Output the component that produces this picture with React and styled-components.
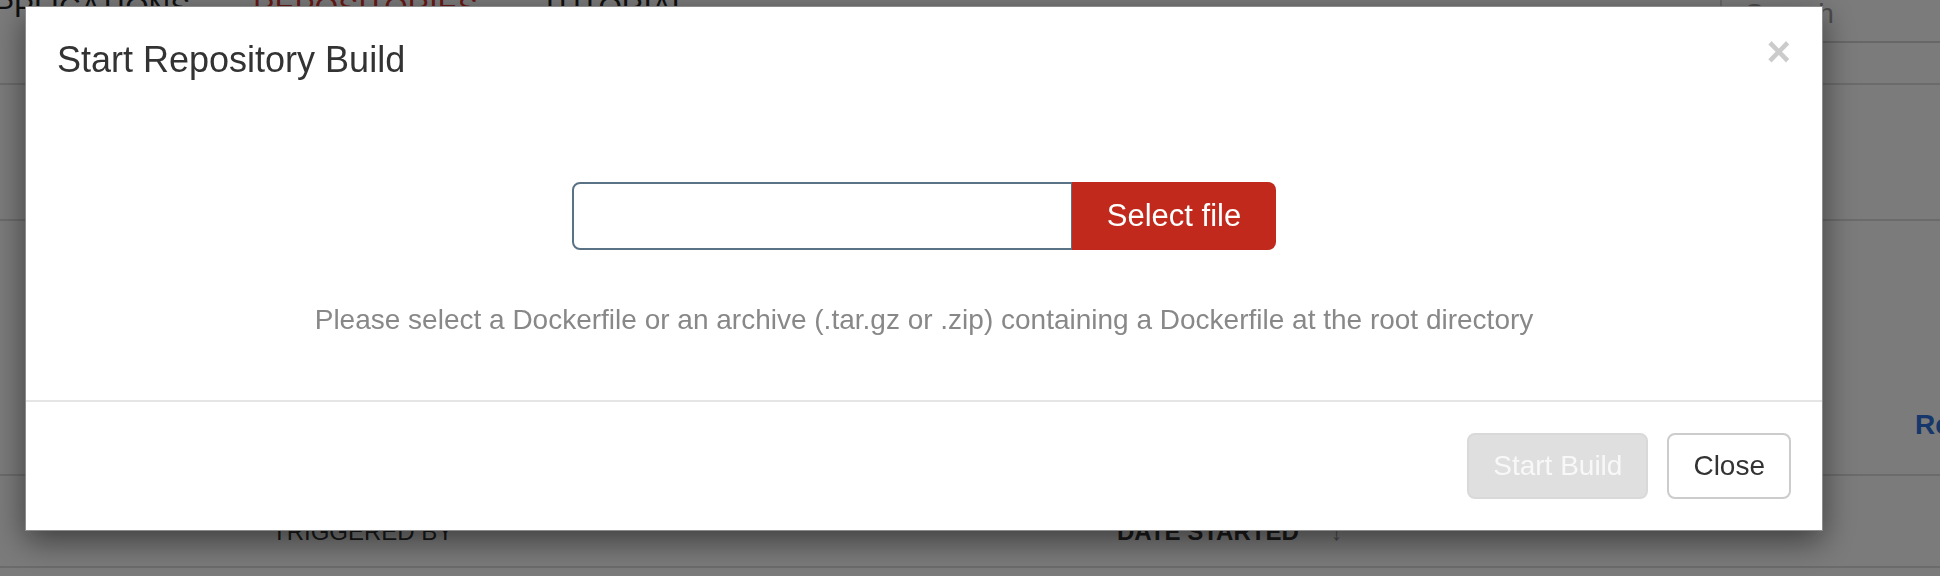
import React from 'react';
import styled, { createGlobalStyle } from 'styled-components';

const GlobalStyle = createGlobalStyle`
  html, body {
    margin: 0;
    padding: 0;
    width: 1940px;
    height: 576px;
    overflow: hidden;
    background: #f6f6f6;
    font-family: "Liberation Sans", Arial, Helvetica, sans-serif;
  }
  * {
    box-sizing: border-box;
  }
`;

const Page = styled.div`
  width: 1940px;
  height: 576px;
  overflow: hidden;
  background: #f6f6f6;
  color: #333;
`;

const Nav = styled.header`
  height: 85px;
  border-bottom: 2px solid #d6d6d6;
  display: flex;
  justify-content: space-between;
  align-items: flex-start;
`;

const NavLinks = styled.nav`
  display: flex;
  gap: 63px;
  margin-left: -26px;
  margin-top: -8px;
`;

const NavLink = styled.a`
  font-size: 30px;
  line-height: 30px;
  text-transform: uppercase;
  text-decoration: none;
  color: ${(p) => (p.$active ? '#d2322d' : '#222')};
`;

const Search = styled.div`
  width: 220px;
  height: 73px;
  margin-top: -30px;
  border: 2px solid #cfcfcf;
  border-right: none;
  display: flex;
  align-items: flex-end;
  padding: 0 0 13px 23px;
  font-size: 28px;
  line-height: 28px;
  color: #999;
`;

const Section = styled.section`
  height: ${(p) => p.$h}px;
  border-bottom: 2px solid #d6d6d6;
`;

const Toolbar = styled(Section)`
  display: flex;
  justify-content: flex-end;
  align-items: flex-start;
  padding-top: 188px;
`;

const ToolLink = styled.a`
  width: 120px;
  margin-right: -95px;
  font-size: 28px;
  line-height: 32px;
  font-weight: bold;
  color: #2a6fd6;
  text-decoration: none;
  white-space: nowrap;
`;

const TableHead = styled(Section)`
  display: grid;
  grid-template-columns: 272px 845px auto;
  padding-top: 36px;
  font-size: 24px;
  line-height: 40px;
  text-transform: uppercase;
`;

const HeadCell = styled.div`
  font-weight: ${(p) => (p.$sorted ? 'bold' : 'normal')};
  color: #333;
  white-space: nowrap;
`;

const SortArrow = styled.span`
  margin-left: 32px;
  color: #999;
  font-weight: normal;
`;

const Backdrop = styled.div`
  position: fixed;
  inset: 0;
  background: rgba(0, 0, 0, 0.5);
`;

const Modal = styled.div`
  position: fixed;
  top: 6px;
  left: 25px;
  width: 1798px;
  background: #fff;
  border: 1px solid rgba(0, 0, 0, 0.45);
  box-shadow: 0 10px 30px rgba(0, 0, 0, 0.5);
`;

const Header = styled.div`
  display: flex;
  justify-content: space-between;
  align-items: flex-start;
  padding: 27px 31px 30px 31px;
`;

const Title = styled.h4`
  margin: 0;
  font-size: 36px;
  line-height: 51px;
  font-weight: normal;
  color: #333;
`;

const CloseX = styled.button`
  margin-top: -3px;
  padding: 0;
  border: 0;
  background: transparent;
  font-family: "Liberation Sans", Arial, sans-serif;
  font-size: 42px;
  line-height: 1;
  font-weight: bold;
  color: #000;
  opacity: 0.2;
  cursor: pointer;
`;

const Body = styled.div`
  padding: 67px 31px 60px;
  display: flex;
  flex-direction: column;
  align-items: center;
`;

const InputGroup = styled.div`
  display: flex;
  height: 68px;
`;

const FileInput = styled.div`
  width: 500px;
  border: 2px solid #5a7286;
  border-right-width: 1px;
  border-radius: 8px 0 0 8px;
  background: #fff;
`;

const SelectButton = styled.button`
  width: 204px;
  border: 0;
  border-radius: 0 8px 8px 0;
  background: #c0291c;
  color: #fff;
  font-family: "Liberation Sans", Arial, sans-serif;
  font-size: 31px;
  cursor: pointer;
`;

const Help = styled.p`
  margin: 50px 0 0;
  font-size: 28px;
  line-height: 40px;
  color: #888;
`;

const Footer = styled.div`
  border-top: 2px solid #e5e5e5;
  padding: 31px 31px 31px;
  display: flex;
  justify-content: flex-end;
  gap: 19px;
`;

const Button = styled.button`
  height: 66px;
  padding: 0 24px;
  border: 2px solid ${(p) => (p.$disabled ? '#d9d9d9' : '#ccc')};
  border-radius: 8px;
  background: ${(p) => (p.$disabled ? '#dfdfdf' : '#fff')};
  color: ${(p) => (p.$disabled ? '#f8f8f8' : '#333')};
  font-family: "Liberation Sans", Arial, sans-serif;
  font-size: 28px;
  cursor: ${(p) => (p.$disabled ? 'not-allowed' : 'pointer')};
`;

export default function App() {
  return (
    <>
      <GlobalStyle />
      <Page>
        <Nav>
          <NavLinks>
            <NavLink>Applications</NavLink>
            <NavLink $active>Repositories</NavLink>
            <NavLink>Tutorial</NavLink>
          </NavLinks>
          <Search>Search</Search>
        </Nav>
        <Section $h={136} />
        <Toolbar $h={255}>
          <ToolLink>Refresh</ToolLink>
        </Toolbar>
        <TableHead $h={92}>
          <div />
          <HeadCell>Triggered by</HeadCell>
          <HeadCell $sorted>
            Date started<SortArrow>↓</SortArrow>
          </HeadCell>
        </TableHead>
      </Page>
      <Backdrop />
      <Modal>
        <Header>
          <Title>Start Repository Build</Title>
          <CloseX aria-label="Close">×</CloseX>
        </Header>
        <Body>
          <InputGroup>
            <FileInput />
            <SelectButton>Select file</SelectButton>
          </InputGroup>
          <Help>
            Please select a Dockerfile or an archive (.tar.gz or .zip) containing a Dockerfile at the root directory
          </Help>
        </Body>
        <Footer>
          <Button $disabled>Start Build</Button>
          <Button>Close</Button>
        </Footer>
      </Modal>
    </>
  );
}
